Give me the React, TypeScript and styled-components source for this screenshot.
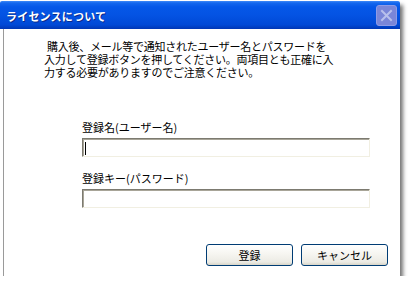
import React from 'react'
import styled, { createGlobalStyle } from 'styled-components'

const GlobalStyle = createGlobalStyle`
	html, body {
		margin: 0;
		padding: 0;
		background: #ffffff;
	}
	body {
		font-family: 'Noto Sans CJK JP', 'Noto Sans', sans-serif;
		font-size: 11px;
		color: #000000;
	}
`

const Dialog = styled.div`
	width: 400px;
	height: 275px;
	margin-top: 1px;
	display: flex;
	flex-direction: column;
	box-shadow: 3px 4px 4px rgba(0, 0, 0, 0.55);
	background: #ffffff;
`

const TitleBar = styled.div`
	height: 28px;
	flex: none;
	display: flex;
	align-items: center;
	justify-content: space-between;
	padding: 0 2px 0 6px;
	background: linear-gradient(
		180deg,
		#3f8af7 0px,
		#1467ee 2px,
		#0557e8 6px,
		#0453e3 50%,
		#0049d6 85%,
		#0036b4 100%
	);
	border-radius: 2px 2px 0 0;
`

const Title = styled.span`
	color: #ffffff;
	font-weight: 700;
	font-size: 11px;
	letter-spacing: 0.2px;
	text-shadow: 1px 1px 0 #0b2a8c;
	margin-top: 1px;
`

const CloseButton = styled.div`
	width: 19px;
	height: 19px;
	margin-right: 1px;
	margin-top: 1px;
	display: flex;
	align-items: center;
	justify-content: center;
	border: 1px solid #8e9be6;
	border-radius: 3px;
	background: #7a86d8;
	svg {
		display: block;
	}
`

const Body = styled.div`
	flex: 1;
	display: flex;
	flex-direction: column;
	margin-left: 3px;
	border-left: 1px solid #9a9a9a;
	padding: 11px 12px 10px 40px;
`

const Message = styled.p`
	margin: 0;
	font-size: 11px;
	line-height: 13px;
	letter-spacing: -0.25px;
	white-space: nowrap;
`

const Indent = styled.span`
	padding-left: 3px;
`

const Form = styled.div`
	display: flex;
	flex-direction: column;
	width: 288px;
	margin: 42px 0 0 38px;
	gap: 15px;
`

const Field = styled.label`
	display: flex;
	flex-direction: column;
	gap: 4px;
`

const Label = styled.span`
	font-size: 11px;
	line-height: 13px;
`

const InputWrap = styled.div`
	position: relative;
	height: 19px;
`

const TextBox = styled.input`
	box-sizing: border-box;
	width: 100%;
	height: 19px;
	margin: 0;
	padding: 0 3px;
	border: 1px solid;
	border-color: #7c7a70 #f1efe2 #f1efe2 #7c7a70;
	box-shadow: inset 1px 1px 0 #a8a598;
	background: #ffffff;
	font-family: inherit;
	font-size: 11px;
	outline: none;
`

const Caret = styled.span`
	position: absolute;
	left: 3px;
	top: 4px;
	width: 1px;
	height: 13px;
	background: #000000;
`

const Buttons = styled.div`
	margin-top: auto;
	display: flex;
	justify-content: flex-end;
	gap: 8px;
`

const Button = styled.button`
	box-sizing: border-box;
	width: 87px;
	height: 22px;
	padding: 0;
	border: 1px solid #003c74;
	border-radius: 3px;
	background: linear-gradient(180deg, #ffffff 0%, #f6f5f0 45%, #ecebe4 85%, #d8d5c8 100%);
	font-family: inherit;
	font-size: 11px;
	color: #000000;
	cursor: default;
`

export default function App() {
	return (
		<>
			<GlobalStyle />
			<Dialog>
				<TitleBar>
					<Title>ライセンスについて</Title>
					<CloseButton>
						<svg width="13" height="13" viewBox="0 0 13 13">
							<path d="M2 2 L11 11 M11 2 L2 11" stroke="#b8c0ec" strokeWidth="2" strokeLinecap="square" />
						</svg>
					</CloseButton>
				</TitleBar>
				<Body>
					<Message>
						<Indent>購入後、メール等で通知されたユーザー名とパスワードを</Indent>
						<br />
						入力して登録ボタンを押してください。両項目とも正確に入
						<br />
						力する必要がありますのでご注意ください。
					</Message>
					<Form>
						<Field>
							<Label>登録名(ユーザー名)</Label>
							<InputWrap>
								<TextBox type="text" />
								<Caret />
							</InputWrap>
						</Field>
						<Field>
							<Label>登録キー(パスワード)</Label>
							<InputWrap>
								<TextBox type="password" />
							</InputWrap>
						</Field>
					</Form>
					<Buttons>
						<Button>登録</Button>
						<Button>キャンセル</Button>
					</Buttons>
				</Body>
			</Dialog>
		</>
	)
}
